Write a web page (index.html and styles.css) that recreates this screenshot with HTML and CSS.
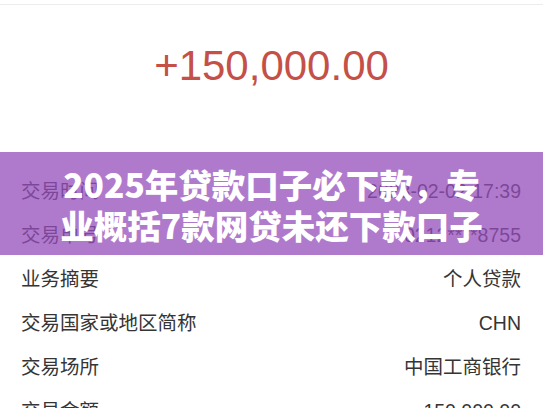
FILE: index.html
```html
<!DOCTYPE html>
<html lang="zh-CN">
<head>
<meta charset="utf-8">
<title>交易详情</title>
<link rel="stylesheet" href="styles.css">
</head>
<body>
<div class="page">
  <div class="topbar"></div>
  <div class="amount">+150,000.00</div>
  <div class="list">
    <div class="row"><span class="label">交易时间</span><span class="value">2023-02-02 17:39</span></div>
    <div class="row"><span class="label">交易单号</span><span class="value">0212****8755</span></div>
    <div class="row"><span class="label">业务摘要</span><span class="value">个人贷款</span></div>
    <div class="row"><span class="label">交易国家或地区简称</span><span class="value">CHN</span></div>
    <div class="row"><span class="label">交易场所</span><span class="value">中国工商银行</span></div>
    <div class="row"><span class="label">交易金额</span><span class="value">150,000.00</span></div>
  </div>
  <div class="banner">
    <div class="banner-title">2025年贷款口子必下款，专<br>业概括7款网贷未还下款口子</div>
  </div>
</div>
</body>
</html>
```
FILE: styles.css
```css
html, body {
  margin: 0;
  padding: 0;
  background: #ffffff;
}
.page {
  position: relative;
  width: 543px;
  height: 408px;
  overflow: hidden;
  font-family: "Liberation Sans", "Noto Sans CJK SC", sans-serif;
}
.topbar {
  height: 4px;
  border-bottom: 1px solid #ececec;
}
.amount {
  padding-top: 36px;
  line-height: 50px;
  font-size: 42px;
  color: #c45048;
  text-align: center;
}
.list {
  margin-top: 78px;
}
.row {
  display: flex;
  justify-content: space-between;
  align-items: center;
  height: 44px;
  line-height: 44px;
  padding: 0 22px 0 21px;
  font-size: 19.5px;
  color: #353535;
}
.banner {
  position: absolute;
  left: 0;
  top: 152px;
  width: 100%;
  height: 103px;
  background: rgba(149, 77, 187, 0.75);
  display: flex;
  align-items: center;
  justify-content: center;
}
.banner-title {
  font-family: "Noto Sans CJK SC", sans-serif;
  font-weight: 900;
  font-size: 33.5px;
  line-height: 41px;
  color: #ffffff;
  text-align: center;
}
```
